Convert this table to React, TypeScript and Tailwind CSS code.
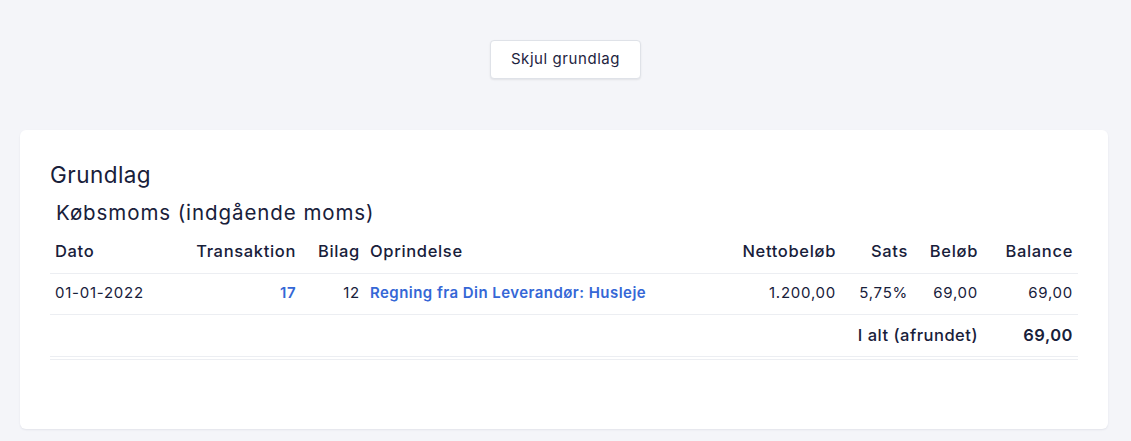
import React from "react"

interface Linje {
  dato: string
  transaktion: string
  bilag: string
  oprindelse: string
  netto: string
  sats: string
  beloeb: string
  balance: string
}

const linjer: Linje[] = [
  {
    dato: "01-01-2022",
    transaktion: "17",
    bilag: "12",
    oprindelse: "Regning fra Din Leverandør: Husleje",
    netto: "1.200,00",
    sats: "5,75%",
    beloeb: "69,00",
    balance: "69,00"
  }
]

const App: React.FC = () => {
  return (
    <div
      className="min-h-[441px] bg-[#f4f5f9] pt-10 pr-[23px] pb-3 pl-5 text-[#18203a]"
      style={{ fontFamily: "Inter, 'Open Sans', sans-serif" }}
    >
      <div className="flex justify-center">
        <button
          type="button"
          className="ml-[3px] h-[39px] w-[151px] rounded-[4px] border border-[#dfe2e8] bg-white text-[15px] tracking-[0.038em] text-[#1d2440] shadow-[0_1px_2px_rgba(0,0,0,0.08)]"
        >
          Skjul grundlag
        </button>
      </div>

      <div className="mt-[51px] h-[299px] rounded-[6px] bg-white px-[30px] pt-[30px] shadow-[0_1px_2px_rgba(20,30,60,0.08)]">
        <h1 className="text-[22.5px] leading-[30px] tracking-[0.02em]">Grundlag</h1>
        <h2 className="mt-[9px] pl-[6px] text-[20.5px] leading-[28px] tracking-[0.045em]">
          Købsmoms (indgående moms)
        </h2>
        <table className="mt-[4px] w-full table-fixed border-collapse">
          <colgroup>
            <col className="w-[130px]" />
            <col className="w-[121px]" />
            <col className="w-[64px]" />
            <col />
            <col className="w-[110px]" />
            <col className="w-[72px]" />
            <col className="w-[70px]" />
            <col className="w-[95px]" />
          </colgroup>
          <thead>
            <tr className="h-[42px] border-b border-[#eceef2] text-[16.5px] tracking-[0.04em]">
              <th className="px-[5px] text-left font-medium">Dato</th>
              <th className="px-[5px] text-right font-medium">Transaktion</th>
              <th className="px-[5px] text-right font-medium">Bilag</th>
              <th className="px-[5px] text-left font-medium">Oprindelse</th>
              <th className="px-[5px] text-right font-medium">Nettobeløb</th>
              <th className="px-[5px] text-right font-medium">Sats</th>
              <th className="px-[5px] text-right font-medium">Beløb</th>
              <th className="px-[5px] text-right font-medium">Balance</th>
            </tr>
          </thead>
          <tbody className="text-[15px] tracking-[0.05em]">
            {linjer.map((l, i) => (
              <tr key={i} className="h-[41px] border-b border-[#eceef2]">
                <td className="px-[5px] text-left">{l.dato}</td>
                <td className="px-[5px] text-right font-semibold tracking-[0.03em] text-[#3567d6]">
                  {l.transaktion}
                </td>
                <td className="px-[5px] text-right">{l.bilag}</td>
                <td className="whitespace-nowrap px-[5px] text-left font-semibold tracking-[0.03em] text-[#3567d6]">
                  {l.oprindelse}
                </td>
                <td className="px-[5px] text-right">{l.netto}</td>
                <td className="px-[5px] text-right">{l.sats}</td>
                <td className="px-[5px] text-right">{l.beloeb}</td>
                <td className="px-[5px] text-right">{l.balance}</td>
              </tr>
            ))}
            <tr className="h-[44px] border-b-[4px] border-double border-[#eceef2] text-[16.5px] font-medium tracking-[0.03em]">
              <td colSpan={5}></td>
              <td colSpan={2} className="whitespace-nowrap px-[5px] text-right">
                I alt (afrundet)
              </td>
              <td className="px-[5px] text-right font-semibold">69,00</td>
            </tr>
          </tbody>
        </table>
      </div>
    </div>
  )
}

export default App
